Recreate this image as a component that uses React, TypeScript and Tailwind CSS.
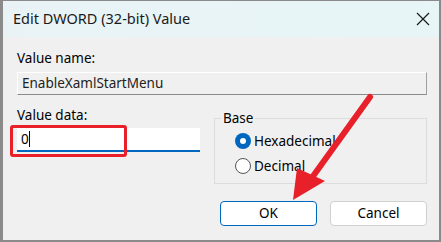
export default function App() {
  return (
    <div
      className="relative w-[441px] h-[242px] overflow-hidden bg-[#f0f0f0] border-l-[3px] border-r-2 border-b-2 border-t border-[#8a8a8a] text-[#000] text-[13.5px]"
      style={{ fontFamily: '"Noto Sans", "Liberation Sans", sans-serif' }}
    >
      {/* title bar */}
      <div className="h-[36px] flex items-center justify-between pl-[10px] pr-[9px] bg-gradient-to-r from-[#e9f3f6] to-[#e7f5f6]">
        <span className="text-[14.5px] text-[#1a1a1a]">Edit DWORD (32-bit) Value</span>
        <svg width="14" height="14" viewBox="0 0 14 14">
          <path d="M1 1L13 13M13 1L1 13" stroke="#1a1a1a" strokeWidth="1.2" />
        </svg>
      </div>

      <div className="pl-[14px] pr-[12px] pt-[12px]">
        <div className="leading-[18px]">Value name:</div>
        <div className="mt-[5px] h-[23px] border border-t-white border-l-white border-r-[#a0a0a0] border-b-[#8a8a8a] px-[4px] leading-[21px] text-[#222]">
          EnableXamlStartMenu
        </div>

        <div className="flex mt-[8px]">
          <div className="w-[197px]">
            <div className="leading-[18px] mt-[3px]">Value data:</div>
            <div className="mt-[4px] relative w-[183px] h-[24px] bg-white border-b-2 border-[#0067c0] px-[4px] leading-[22px]">
              0<span className="inline-block w-px h-[16px] bg-black align-middle -mt-[2px]" />
              <div className="absolute -left-[7px] -top-[3px] w-[117px] h-[32px] border-[3px] border-[#e8202a] rounded-[3px]" />
            </div>
          </div>

          <div className="relative flex-1 h-[66px] mt-[15px] border border-[#dcdcdc]">
            <span className="absolute -top-[10px] left-[6px] bg-[#f0f0f0] px-[2px] leading-[18px]">Base</span>
            <div className="pl-[20px] pt-[13px] flex flex-col gap-[7px]">
              <label className="flex items-center gap-[3px] leading-[18px]">
                <span className="w-[16px] h-[16px] rounded-full bg-[#0067c0] flex items-center justify-center">
                  <span className="w-[6px] h-[6px] rounded-full bg-white" />
                </span>
                Hexadecimal
              </label>
              <label className="flex items-center gap-[3px] leading-[18px]">
                <span className="w-[16px] h-[16px] rounded-full border border-[#555] bg-white" />
                Decimal
              </label>
            </div>
          </div>
        </div>

        <div className="flex justify-end gap-[13px] mt-[17px]">
          <button className="w-[97px] h-[25px] bg-white border border-[#0067c0] rounded-[4px]">OK</button>
          <button className="w-[97px] h-[25px] bg-white border border-[#d0d0d0] rounded-[4px]">Cancel</button>
        </div>
      </div>

      {/* annotation arrow */}
      <svg className="absolute left-0 top-0 pointer-events-none" width="441" height="242">
        <line x1="367" y1="96" x2="308" y2="178" stroke="#e8202a" strokeWidth="6" strokeLinecap="round" />
        <polygon points="290,199 294,167 322,180" fill="#e8202a" />
      </svg>
    </div>
  )
}
